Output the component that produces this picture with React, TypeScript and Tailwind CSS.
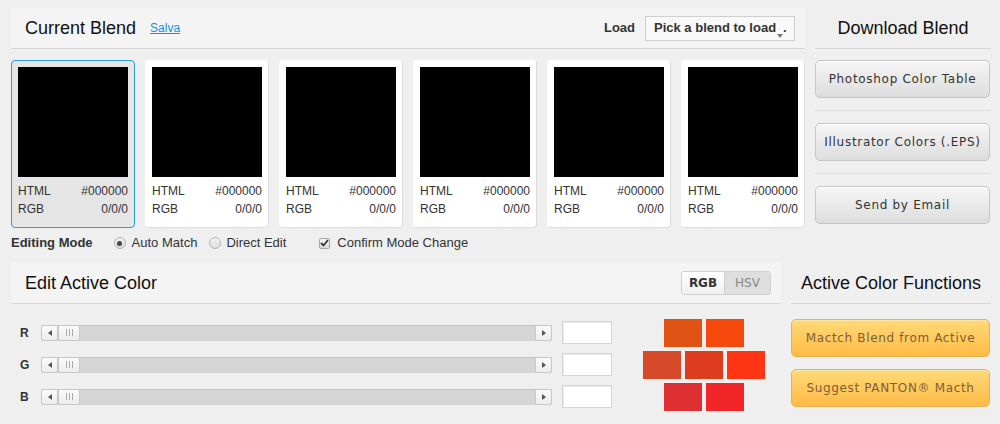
import React from "react";

type Swatch = { html: string; rgb: string };

const swatches: Swatch[] = [
  { html: "#000000", rgb: "0/0/0" },
  { html: "#000000", rgb: "0/0/0" },
  { html: "#000000", rgb: "0/0/0" },
  { html: "#000000", rgb: "0/0/0" },
  { html: "#000000", rgb: "0/0/0" },
  { html: "#000000", rgb: "0/0/0" },
];

const bricks: string[][] = [
  ["#de5214", "#f5480c"],
  ["#d64a2a", "#de3c1e", "#ff3414"],
  ["#de3032", "#f22628"],
];

function Tri({ dir }: { dir: "left" | "right" | "down" }) {
  if (dir === "down") {
    return (
      <svg width="6" height="4" viewBox="0 0 6 4" className="inline-block">
        <path d="M0 0 L6 0 L3 4 Z" fill="#777" />
      </svg>
    );
  }
  return (
    <svg width="4" height="6" viewBox="0 0 4 6">
      {dir === "left" ? <path d="M4 0 L4 6 L0 3 Z" fill="#555" /> : <path d="M0 0 L0 6 L4 3 Z" fill="#555" />}
    </svg>
  );
}

function SwatchCard({ s, active }: { s: Swatch; active?: boolean }) {
  return (
    <div
      className={`w-[124px] h-[168px] rounded-[4px] border p-[6px] ${
        active ? "bg-[#e5e5e5] border-[#2c9be6]" : "bg-white border-white border-r-[#dcdcdc] border-b-[#dcdcdc]"
      }`}
    >
      <div className="w-[110px] h-[110px]" style={{ background: s.html }} />
      <div className="mt-[5px] text-[12px] leading-[18px] text-[#333]">
        <div className="flex justify-between">
          <span>HTML</span>
          <span>{s.html}</span>
        </div>
        <div className="flex justify-between">
          <span>RGB</span>
          <span>{s.rgb}</span>
        </div>
      </div>
    </div>
  );
}

function GrayButton({ label }: { label: string }) {
  return (
    <button className="w-[175px] h-[38px] rounded-[5px] border border-[#c6c6c6] bg-gradient-to-b from-[#f6f6f6] to-[#dddddd] text-[12px] tracking-[0.7px] text-[#333] font-['DejaVu_Sans',Verdana,sans-serif] shadow-[inset_0_1px_0_#fff]">
      {label}
    </button>
  );
}

function OrangeButton({ label }: { label: string }) {
  return (
    <button className="w-[199px] h-[38px] rounded-[5px] border border-[#e3b450] bg-gradient-to-b from-[#ffd977] to-[#ffbb44] text-[12px] tracking-[0.65px] text-[#7e5f35] font-['DejaVu_Sans',Verdana,sans-serif] shadow-[inset_0_1px_0_#ffe9a8]">
      {label}
    </button>
  );
}

function Slider({ label }: { label: string }) {
  return (
    <div className="flex items-center h-[23px]">
      <span className="w-[21px] text-[12px] font-bold text-[#333]">{label}</span>
      <div className="flex w-[511px] h-[16px] rounded-[2px] bg-[#d5d5d5] border-t border-[#c2c2c2]">
        <div className="w-[17px] h-[16px] -mt-px flex items-center justify-center rounded-l-[2px] border border-[#c8c8c8] bg-gradient-to-b from-[#fbfbfb] to-[#ececec]">
          <Tri dir="left" />
        </div>
        <div className="w-[22px] h-[16px] -mt-px flex items-center justify-center gap-[2px] rounded-[2px] border border-[#c8c8c8] bg-gradient-to-b from-[#fbfbfb] to-[#ececec]">
          <span className="w-px h-[7px] bg-[#aaa]" />
          <span className="w-px h-[7px] bg-[#aaa]" />
          <span className="w-px h-[7px] bg-[#aaa]" />
        </div>
        <div className="flex-1" />
        <div className="w-[17px] h-[16px] -mt-px flex items-center justify-center rounded-r-[2px] border border-[#c8c8c8] bg-gradient-to-b from-[#fbfbfb] to-[#ececec]">
          <Tri dir="right" />
        </div>
      </div>
      <div className="ml-[10px] w-[50px] h-[23px] bg-white border border-[#d4d4d4] shadow-[inset_1px_1px_0_#ececec]" />
    </div>
  );
}

function Radio({ checked }: { checked?: boolean }) {
  return (
    <span className="inline-flex items-center justify-center w-[12px] h-[12px] rounded-full border border-[#b5b5b5] bg-gradient-to-b from-[#f2f2f2] to-[#dedede]">
      {checked && <span className="w-[5px] h-[5px] rounded-full bg-[#444]" />}
    </span>
  );
}

export default function App() {
  return (
    <div className="w-[1000px] h-[424px] overflow-hidden bg-[#efefef] font-['Liberation_Sans',Arial,sans-serif] text-[#111]">
      {/* Current blend + download */}
      <div className="flex gap-[10px] pl-[11px] pt-[8px]">
        <div className="w-[794px]">
          <div className="h-[41px] flex items-center pl-[14px] pr-[10px] bg-[#f4f4f4] border-b border-[#d6d6d6]">
            <span className="text-[18px]">Current Blend</span>
            <a href="#" className="ml-[14px] text-[12px] text-[#1a8fdc] underline">
              Salva
            </a>
            <span className="ml-auto text-[13px] font-bold text-[#333]">Load</span>
            <div className="ml-[10px] w-[150px] h-[25px] flex items-center pl-[8px] border border-[#cfcfcf] bg-[#f9f9f9] text-[13px] font-bold text-[#333] whitespace-nowrap overflow-hidden">
              Pick a blend to load
              <span className="ml-px inline-flex items-end">
                <Tri dir="down" />
                <span>.</span>
              </span>
            </div>
          </div>

          <div className="mt-[11px] flex gap-[10px]">
            {swatches.map((s, i) => (
              <SwatchCard key={i} s={s} active={i === 0} />
            ))}
          </div>

          <div className="mt-[7px] h-[16px] flex items-center text-[13px] text-[#333]">
            <span className="font-bold">Editing Mode</span>
            <span className="ml-[21px] flex items-center gap-[6px]">
              <Radio checked />
              Auto Match
            </span>
            <span className="ml-[12px] flex items-center gap-[5px]">
              <Radio />
              Direct Edit
            </span>
            <span className="ml-[33px] flex items-center gap-[7px]">
              <span className="w-[11px] h-[11px] flex items-center justify-center rounded-[2px] border border-[#a8a8a8] bg-gradient-to-b from-[#f6f6f6] to-[#dcdcdc]">
                <svg width="9" height="8" viewBox="0 0 9 8">
                  <path d="M1 4 L3.5 6.5 L8 1" stroke="#333" strokeWidth="1.8" fill="none" />
                </svg>
              </span>
              Confirm Mode Change
            </span>
          </div>
        </div>

        <div className="w-[176px]">
          <div className="h-[41px] flex items-center justify-center border-b border-[#d6d6d6] text-[18px]">
            Download Blend
          </div>
          <div className="mt-[11px] flex flex-col">
            <GrayButton label="Photoshop Color Table" />
            <div className="my-[12px] h-px bg-[#dedede]" />
            <GrayButton label="Illustrator Colors (.EPS)" />
            <div className="my-[12px] h-px bg-[#dedede]" />
            <GrayButton label="Send by Email" />
          </div>
        </div>
      </div>

      {/* Edit active color + functions */}
      <div className="mt-[12px] flex gap-[10px] pl-[11px]">
        <div className="w-[770px]">
          <div className="h-[41px] flex items-center pl-[14px] pr-[10px] bg-[#f4f4f4] border-b border-[#d6d6d6]">
            <span className="text-[18px]">Edit Active Color</span>
            <div className="ml-auto flex h-[24px] rounded-[3px] border border-[#cfcfcf] overflow-hidden text-[12px] font-['DejaVu_Sans',Verdana,sans-serif]">
              <span className="w-[43px] flex items-center justify-center font-bold text-[#333] bg-gradient-to-b from-white to-[#f0f0f0] border-r border-[#cfcfcf]">
                RGB
              </span>
              <span className="w-[45px] flex items-center justify-center text-[#888] bg-[#dedede]">HSV</span>
            </div>
          </div>

          <div className="flex pl-[9px] pt-[17px]">
            <div className="flex flex-col gap-[9px]">
              <Slider label="R" />
              <Slider label="G" />
              <Slider label="B" />
            </div>
            <div className="ml-[31px] -mt-[2px] flex flex-col items-center gap-[4px]">
              {bricks.map((row, r) => (
                <div key={r} className="flex gap-[4px]">
                  {row.map((c, i) => (
                    <div key={i} className="w-[38px] h-[28px]" style={{ background: c }} />
                  ))}
                </div>
              ))}
            </div>
          </div>
        </div>

        <div className="w-[200px]">
          <div className="h-[41px] flex items-center justify-center border-b border-[#d6d6d6] text-[18px]">
            Active Color Functions
          </div>
          <div className="mt-[15px] flex flex-col gap-[12px]">
            <OrangeButton label="Mactch Blend from Active" />
            <OrangeButton label="Suggest PANTON® Macth" />
          </div>
        </div>
      </div>
    </div>
  );
}
